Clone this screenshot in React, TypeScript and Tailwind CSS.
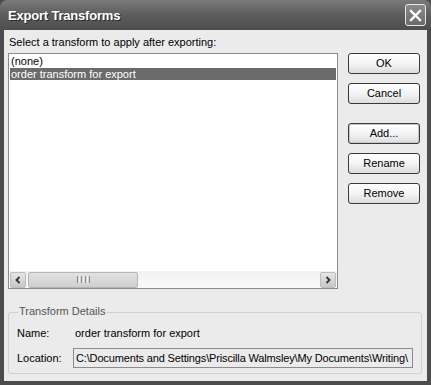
import React from "react";

function Btn({ label, className = "" }: { label: string; className?: string }) {
  return (
    <div
      className={
        "w-[72px] h-[21px] rounded-[3px] border border-[#3a3a3a] bg-gradient-to-b from-[#ffffff] via-[#f4f4f4] to-[#dcdcdc] flex items-center justify-center text-[11px] text-black leading-none " +
        className
      }
    >
      {label}
    </div>
  );
}

export default function App() {
  return (
    <div
      className="w-[431px] h-[385px] flex flex-col bg-[#4c4c4c] overflow-hidden"
      style={{ fontFamily: '"Liberation Sans", Arial, sans-serif' }}
    >
      {/* Title bar */}
      <div className="h-[30px] shrink-0 flex items-center justify-between pl-[8px] pr-[5px] rounded-t-[7px] bg-gradient-to-b from-[#7a7a7a] via-[#5c5c5c] to-[#4e4e4e]">
        <span className="text-white font-bold text-[13px] tracking-[-0.2px] pt-[1px] [text-shadow:1px_1px_0_#2a2a2a]">
          Export Transforms
        </span>
        <div className="w-[21px] h-[22px] rounded-[3px] border border-[#e8e8e8] bg-gradient-to-b from-[#8a8a8a] to-[#6a6a6a] flex items-center justify-center">
          <svg width="13" height="13" viewBox="0 0 13 13">
            <path d="M2 2 L11 11 M11 2 L2 11" stroke="white" strokeWidth="2.4" strokeLinecap="square" />
          </svg>
        </div>
      </div>

      {/* Client area */}
      <div className="flex-1 mx-[4px] mb-[4px] bg-[#ebebeb] flex flex-col pl-[4px] pr-[6px] pt-[6px]">
        <div className="text-[11px] leading-[13px] text-black pl-[1px] h-[17px]">
          Select a transform to apply after exporting:
        </div>

        <div className="flex gap-[10px]">
          {/* Listbox */}
          <div className="w-[330px] h-[236px] border border-[#8c8c8c] bg-white flex flex-col">
            <div className="flex-1 pt-[1px] pl-[1px] pr-[1px]">
              <div className="h-[13px] text-[11px] leading-[13px] pl-[1px] text-black">(none)</div>
              <div className="h-[12px] text-[11px] leading-[12px] pl-[1px] text-white bg-[#6b6b6b]">
                order transform for export
              </div>
            </div>
            {/* Horizontal scrollbar */}
            <div className="h-[17px] flex items-center bg-gradient-to-b from-[#f2f2f2] to-[#fafafa] px-[1px] gap-[2px]">
              <div className="w-[16px] h-[16px] rounded-[2px] border border-[#bdbdbd] bg-gradient-to-b from-[#e6e6e6] to-[#c8c8c8] flex items-center justify-center">
                <svg width="8" height="8" viewBox="0 0 8 8">
                  <path d="M5.5 1 L2.5 4 L5.5 7" stroke="#333" strokeWidth="1.8" fill="none" />
                </svg>
              </div>
              <div className="w-[110px] h-[16px] rounded-[2px] border border-[#b5b5b5] bg-gradient-to-b from-[#e2e2e2] to-[#cfcfcf] flex items-center justify-center gap-[1px]">
                <div className="w-[1px] h-[7px] bg-[#8a8a8a]" />
                <div className="w-[1px] h-[7px] bg-[#f0f0f0]" />
                <div className="w-[1px] h-[7px] bg-[#8a8a8a]" />
                <div className="w-[1px] h-[7px] bg-[#f0f0f0]" />
                <div className="w-[1px] h-[7px] bg-[#8a8a8a]" />
                <div className="w-[1px] h-[7px] bg-[#f0f0f0]" />
                <div className="w-[1px] h-[7px] bg-[#8a8a8a]" />
              </div>
              <div className="flex-1" />
              <div className="w-[16px] h-[16px] rounded-[2px] border border-[#bdbdbd] bg-gradient-to-b from-[#e6e6e6] to-[#c8c8c8] flex items-center justify-center">
                <svg width="8" height="8" viewBox="0 0 8 8">
                  <path d="M2.5 1 L5.5 4 L2.5 7" stroke="#333" strokeWidth="1.8" fill="none" />
                </svg>
              </div>
            </div>
          </div>

          {/* Buttons */}
          <div className="flex flex-col">
            <Btn label="OK" />
            <Btn label="Cancel" className="mt-[9px]" />
            <Btn label="Add..." className="mt-[19px] border-[#2a2a2a] shadow-[inset_0_0_0_1px_#c8c8c8]" />
            <Btn label="Rename" className="mt-[9px]" />
            <Btn label="Remove" className="mt-[9px]" />
          </div>
        </div>

        {/* Group box */}
        <div className="relative mt-[23px] w-[414px] h-[62px] border border-[#d0d0d0] rounded-[3px]">
          <span className="absolute left-[9px] top-[-8px] px-[1px] bg-[#ebebeb] text-[11px] leading-[13px] text-[#555]">
            Transform Details
          </span>
          <div className="flex flex-col pl-[8px] pt-[14px]">
            <div className="flex text-[11px] leading-[13px] text-black h-[13px]">
              <span className="w-[58px]">Name:</span>
              <span>order transform for export</span>
            </div>
            <div className="flex items-center text-[11px] leading-[13px] text-black mt-[8px]">
              <span className="w-[56px]">Location:</span>
              <div className="w-[340px] h-[20px] border border-[#8c8c8c] bg-[#ebebeb] flex items-center pl-[2px] overflow-hidden whitespace-nowrap tracking-[-0.15px]">
                C:\Documents and Settings\Priscilla Walmsley\My Documents\Writing\
              </div>
            </div>
          </div>
        </div>
      </div>
    </div>
  );
}
